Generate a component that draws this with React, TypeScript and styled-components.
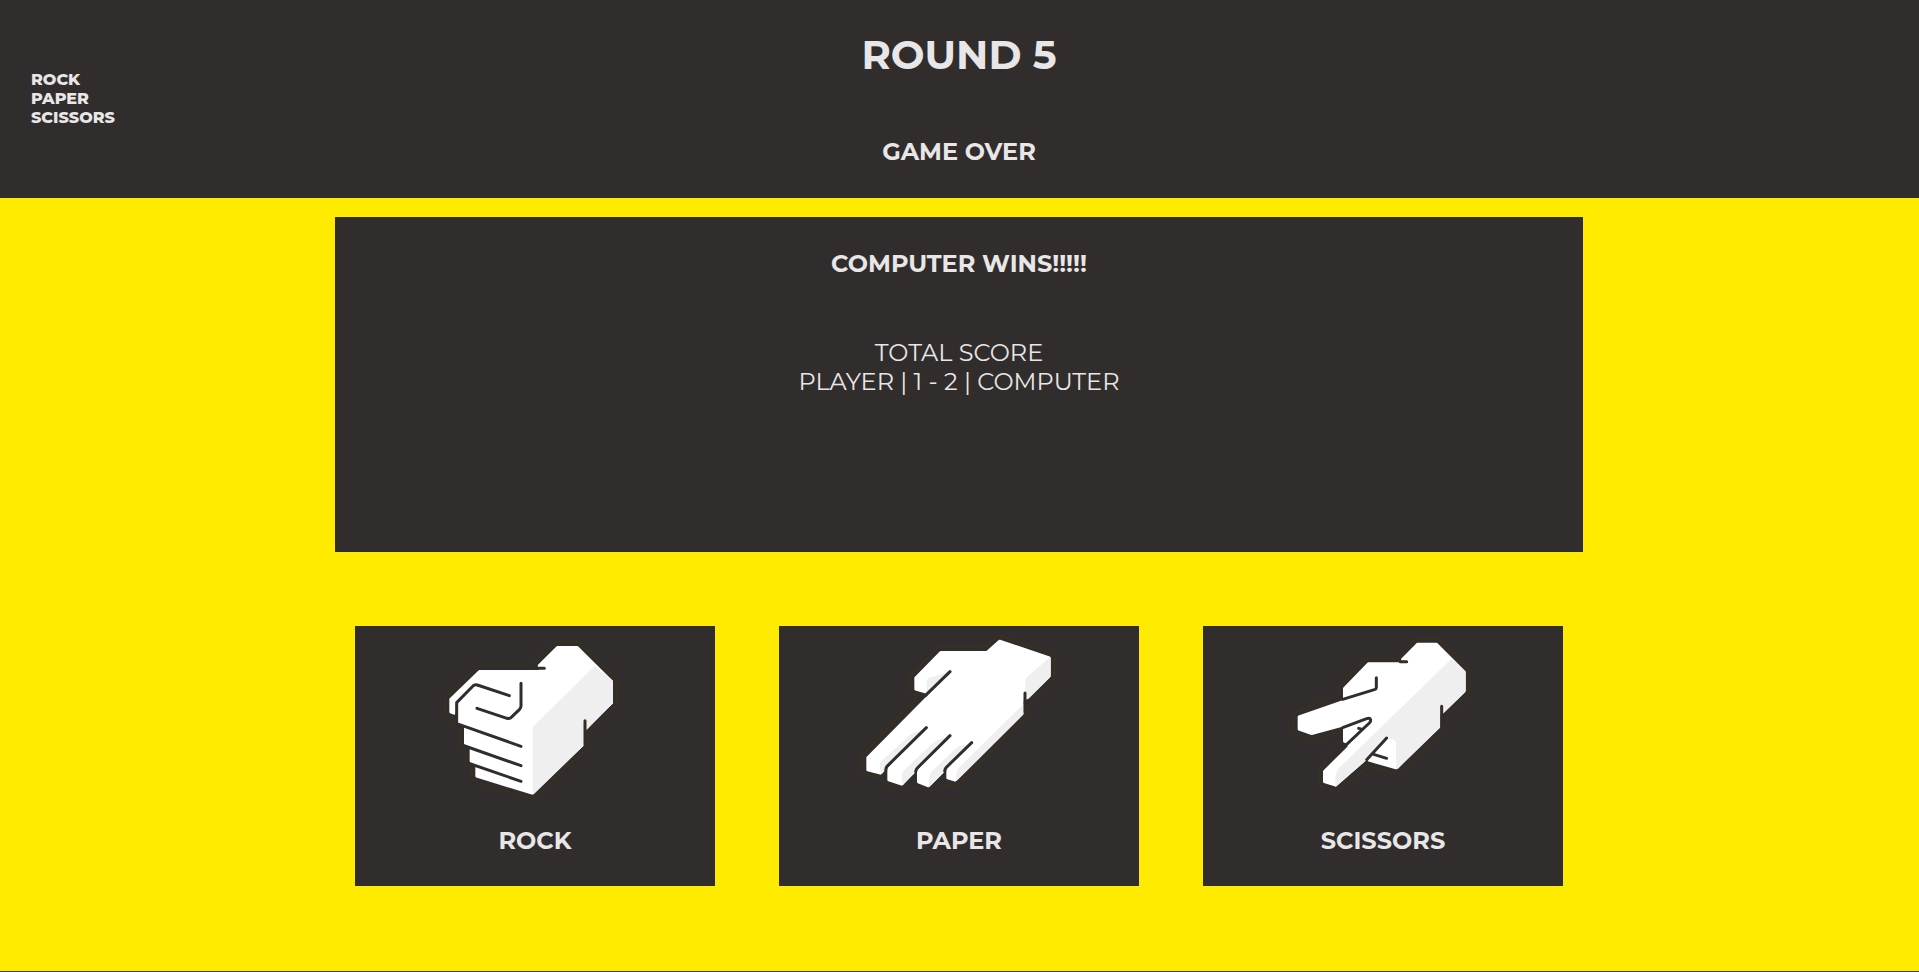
import React from "react";
import styled, { createGlobalStyle } from "styled-components";

const ink = "#312d2c";
const shade = "#efefef";

const GlobalStyle = createGlobalStyle`
  * { box-sizing: border-box; margin: 0; padding: 0; }
  body {
    background: #ffeb00;
    color: #e8e6e6;
    font-family: Montserrat, Inter, "Open Sans", sans-serif;
    overflow: hidden;
  }
`;

const Page = styled.div`
  height: 972px;
  display: flex;
  flex-direction: column;
  align-items: center;
  border-bottom: 1px solid #3b3a26;
`;

const Header = styled.header`
  width: 100%;
  height: 198px;
  flex: none;
  display: grid;
  grid-template-columns: 335px 1fr 335px;
  align-items: center;
  background: ${ink};
`;

const Logo = styled.div`
  padding: 0 0 2px 31px;
  font-size: 16px;
  line-height: 19px;
  font-weight: 800;
`;

const LogoLine = styled.span`
  display: block;
`;

const Status = styled.div`
  height: 198px;
  display: flex;
  flex-direction: column;
  align-items: center;
  padding: 30px 1px 0 0;
`;

const Round = styled.h1`
  font-size: 40px;
  line-height: 49px;
  font-weight: 700;
`;

const Subtitle = styled.h2`
  font-size: 24px;
  line-height: 29px;
  font-weight: 700;
`;

const Outcome = styled(Subtitle)`
  margin-top: 58px;
`;

const Board = styled.main`
  width: 1248px;
  height: 335px;
  flex: none;
  margin: 19px 1px 0 0;
  padding-top: 32px;
  display: flex;
  flex-direction: column;
  align-items: center;
  background: ${ink};
`;

const Score = styled.div`
  margin-top: 60px;
  text-align: center;
  font-size: 24px;
  line-height: 29px;
  font-weight: 400;
`;

const Choices = styled.section`
  margin: 74px 1px 0 0;
  display: flex;
  gap: 64px;
`;

const Choice = styled.button`
  width: 360px;
  height: 260px;
  padding-top: 4px;
  display: flex;
  flex-direction: column;
  align-items: center;
  border: 0;
  background: ${ink};
  color: inherit;
  font-family: inherit;
`;

const ChoiceName = styled(Subtitle)`
  margin-top: 16px;
`;

const Drawing = styled.svg`
  display: block;
  width: 220px;
  height: 180px;
  flex: none;
`;

const Halo = ({ d }: { d: string }) => (
  <>
    <path d={d} fill="#3b3319" stroke="#3b3319" strokeWidth="36" strokeLinejoin="round" />
    <path d={d} fill={ink} stroke={ink} strokeWidth="29" strokeLinejoin="round" />
  </>
);

const Body = ({ d }: { d: string }) => (
  <path d={d} fill="#fff" stroke="#fff" strokeWidth="8" strokeLinejoin="round" />
);

const Lines = ({ d }: { d: string }) => (
  <path d={d} fill="none" stroke={ink} strokeWidth="9" strokeLinecap="round" strokeLinejoin="round" />
);

const rockOutline =
  "M382 52H442L545 154V218L468 294H458V344L306 490L140 439V403L122 396V349L106 343V296L87 277V242L62 246V208L149 124H308Z";

const Rock = () => (
  <Drawing viewBox="-15 0 660 540">
    <Halo d={rockOutline} />
    <Body d="M382 52H442L545 154V218L468 290L458 300V344L306 490L140 439V404L123 396V350L106 343V287L87 281V220L140 165L72 250L62 246V208L149 124H332L327 107Z" />
    <path d="M494 108L549 152V220L472 298L462 305V342Q462 346 459 349L312 492Q308 495 308 490V298Q308 290 315 284Z" fill={shade} />
    <Lines d="M318 115H343M465 272V344M80 292V218L126 171Q132 162 142 165L238 197M273 160V228Q273 234 268 239L246 260Q240 267 231 265L141 235M80 281L273 349M96 345L273 407M114 399L273 454" />
  </Drawing>
);

const paperOutline =
  "M449 48L598 98V153L529 222L517 239V265L315 466L293 459L235 483L205 471L155 478L116 465L91 445L53 435V398L231 206L197 193V159L272 82H411Z";

const Paper = () => (
  <Drawing viewBox="-3 15 660 540">
    <Halo d={paperOutline} />
    <Body d="M197 159L272 82H411L449 48L598 98V153L530 219L517 225V265L315 466L293 459V431L320 400L290 425L276 443L235 483L205 471V437L240 403L193 431V440L155 478L116 465V431L155 388L106 420V430L91 445L53 435V398L240 209L228 202L197 193Z" />
    <path d="M602 100V151Q602 155 599 158L535 222L526 200V168Q526 160 532 155L600 96Z" fill={shade} />
    <path d="M300 140L230 207V170Q230 159 243 157Z" fill={shade} />
    <path d="M521 236V264Q521 268 518 271L322 466Q319 469 319 464V448Q319 436 327 428Z" fill={shade} />
    <path d="M229 308L107 429L96 447Q87 435 90 418Q91 411 97 406L180 329Q190 321 205 319Z" fill={shade} />
    <path d="M300 332L195 440L159 480Q154 465 156 448Q158 439 167 431L250 353Q260 344 274 341Z" fill={shade} />
    <path d="M365 353L284 438L239 485Q235 470 238 454Q240 445 247 438L318 370Q329 361 342 360Z" fill={shade} />
    <Lines d="M300 140L226 212M229 308L111 424Q107 428 107 436M300 332L202 429Q198 433 197 440M365 353L289 427Q285 431 284 438M525 204V262" />
  </Drawing>
);

const scissorsOutline =
  "M413 42H469L553 126V183L490 246L480 290L348 416L266 390L167 466L133 455V424L193 337V288L95 311L57 298V260L193 204V175L265 101H365Z";

const Scissors = () => (
  <Drawing viewBox="-21 0 660 540">
    <Halo d={scissorsOutline} />
    <Body d="M413 42H469L553 126V183L490 242L477 254V290L348 414L267 391L260 384L167 466L133 455V424L208 350L200 337L193 334V296L200 283L95 311L57 298V260L193 213V175L265 101H374L367 88Z" />
    <path d="M514 87L555 124Q557 126 557 130V181Q557 185 554 188L494 247L481 257V288Q481 292 478 295L354 416Q346 420 348 412V343Q349 333 337 328Q325 322 311 330L320 324L260 390L167 470Q164 455 167 437Q168 423 178 413Z" fill={shade} />
    <Lines d="M361 95H380M289 143V173Q289 177 283 179L188 208M485 229V290M188 293L260 266Q270 263 272 269Q273 274 268 279L197 346M236 295L247 298M320 324L260 389M281 373L320 385" />
  </Drawing>
);

const choices = [
  { name: "ROCK", Icon: Rock },
  { name: "PAPER", Icon: Paper },
  { name: "SCISSORS", Icon: Scissors },
];

export default function App() {
  return (
    <Page>
      <GlobalStyle />
      <Header>
        <Logo>
          <LogoLine>ROCK</LogoLine>
          <LogoLine>PAPER</LogoLine>
          <LogoLine>SCISSORS</LogoLine>
        </Logo>
        <Status>
          <Round>ROUND 5</Round>
          <Outcome>GAME OVER</Outcome>
        </Status>
      </Header>
      <Board>
        <Subtitle>COMPUTER WINS!!!!!</Subtitle>
        <Score>
          <p>TOTAL SCORE</p>
          <p>PLAYER | 1 - 2 | COMPUTER</p>
        </Score>
      </Board>
      <Choices>
        {choices.map(({ name, Icon }) => (
          <Choice key={name}>
            <Icon />
            <ChoiceName>{name}</ChoiceName>
          </Choice>
        ))}
      </Choices>
    </Page>
  );
}
